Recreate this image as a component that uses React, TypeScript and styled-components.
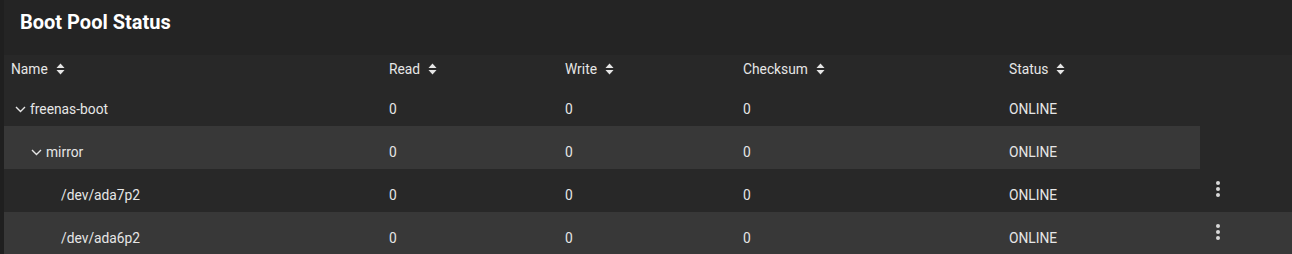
import React from 'react';
import styled, { createGlobalStyle } from 'styled-components';

const GlobalStyle = createGlobalStyle`
  body {
    margin: 0;
    background: #1f1f1f;
    font-family: Roboto, "Liberation Sans", sans-serif;
  }
`;

type Vdev = {
  name: string;
  level: number;
  expandable?: boolean;
  read: number;
  write: number;
  checksum: number;
  status: string;
  actions?: boolean;
};

const rows: Vdev[] = [
  { name: 'freenas-boot', level: 0, expandable: true, read: 0, write: 0, checksum: 0, status: 'ONLINE' },
  { name: 'mirror', level: 1, expandable: true, read: 0, write: 0, checksum: 0, status: 'ONLINE' },
  { name: '/dev/ada7p2', level: 2, read: 0, write: 0, checksum: 0, status: 'ONLINE', actions: true },
  { name: '/dev/ada6p2', level: 2, read: 0, write: 0, checksum: 0, status: 'ONLINE', actions: true },
];

const columns = ['Name', 'Read', 'Write', 'Checksum', 'Status'];

const SortIcon = () => (
  <svg width="9" height="12" viewBox="0 0 9 12">
    <path d="M4.5 0.5 L8.5 5 H0.5 Z" fill="#e6e6e6" />
    <path d="M4.5 11.5 L8.5 7 H0.5 Z" fill="#e6e6e6" />
  </svg>
);

const Chevron = () => (
  <svg width="11" height="7" viewBox="0 0 11 7">
    <polyline points="1,1 5.5,5.5 10,1" fill="none" stroke="#e6e6e6" strokeWidth="1.4" />
  </svg>
);

const MoreIcon = () => (
  <svg width="6" height="16" viewBox="0 0 6 16">
    <circle cx="3" cy="2" r="2" fill="#d8d8d8" />
    <circle cx="3" cy="8" r="2" fill="#d8d8d8" />
    <circle cx="3" cy="14" r="2" fill="#d8d8d8" />
  </svg>
);

const App = () => {
  return (
    <>
      <GlobalStyle />
      <Page>
        <Card>
          <TitleBar>
            <h1>Boot Pool Status</h1>
          </TitleBar>
          <Table>
            <HeaderRow>
              <Cells>
                {columns.map((c) => (
                  <HeadCell key={c}>
                    {c}
                    <SortIcon />
                  </HeadCell>
                ))}
              </Cells>
            </HeaderRow>
            {rows.map((r, i) => (
              <Row key={r.name}>
                <Cells $striped={i % 2 === 1}>
                  <NameCell $level={r.level}>
                    {r.expandable ? <Toggle><Chevron /></Toggle> : null}
                    {r.name}
                  </NameCell>
                  <Cell>{r.read}</Cell>
                  <Cell>{r.write}</Cell>
                  <Cell>{r.checksum}</Cell>
                  <Cell>{r.status}</Cell>
                </Cells>
                {r.actions ? (
                  <ActionCell $striped={i % 2 === 1}>
                    <MoreIcon />
                  </ActionCell>
                ) : null}
              </Row>
            ))}
          </Table>
        </Card>
      </Page>
    </>
  );
};

export default App;

const Page = styled.div`
  width: 1292px;
  height: 254px;
  padding-left: 4px;
  box-sizing: border-box;
  overflow: hidden;
`;

const Card = styled.div`
  background-color: #282828;
  height: 100%;
`;

const TitleBar = styled.div`
  height: 55px;
  background-color: #242424;
  display: flex;
  align-items: flex-start;
  padding-left: 16px;
  h1 {
    margin: 11px 0 0;
    font-size: 20px;
    font-weight: 700;
    color: #ffffff;
    line-height: 23px;
  }
`;

const Table = styled.div`
  display: flex;
  flex-direction: column;
`;

const HeaderRow = styled.div`
  height: 28px;
  display: flex;
`;

const Row = styled.div`
  height: 43px;
  display: flex;
`;

const Cells = styled.div<{ $striped?: boolean }>`
  width: 1196px;
  display: grid;
  grid-template-columns: 378px 176px 178px 266px 198px;
  background-color: ${(p) => (p.$striped ? '#383838' : 'transparent')};
`;

const HeadCell = styled.div`
  display: flex;
  align-items: center;
  gap: 8px;
  padding-left: 7px;
  font-size: 13.8px;
  color: #e6e6e6;
`;

const Cell = styled.div`
  display: flex;
  align-items: center;
  padding: 8px 0 0 7px;
  font-size: 13.8px;
  color: #e6e6e6;
`;

const NameCell = styled(Cell)<{ $level: number }>`
  padding-left: ${(p) => (p.$level === 2 ? 57 : 11 + p.$level * 16)}px;
`;

const Toggle = styled.span`
  display: inline-flex;
  width: 15px;
  margin-top: 1px;
`;

const ActionCell = styled.div<{ $striped?: boolean }>`
  flex: 1;
  display: flex;
  align-items: flex-start;
  padding: 12px 0 0 15px;
  background-color: ${(p) => (p.$striped ? '#383838' : 'transparent')};
`;
